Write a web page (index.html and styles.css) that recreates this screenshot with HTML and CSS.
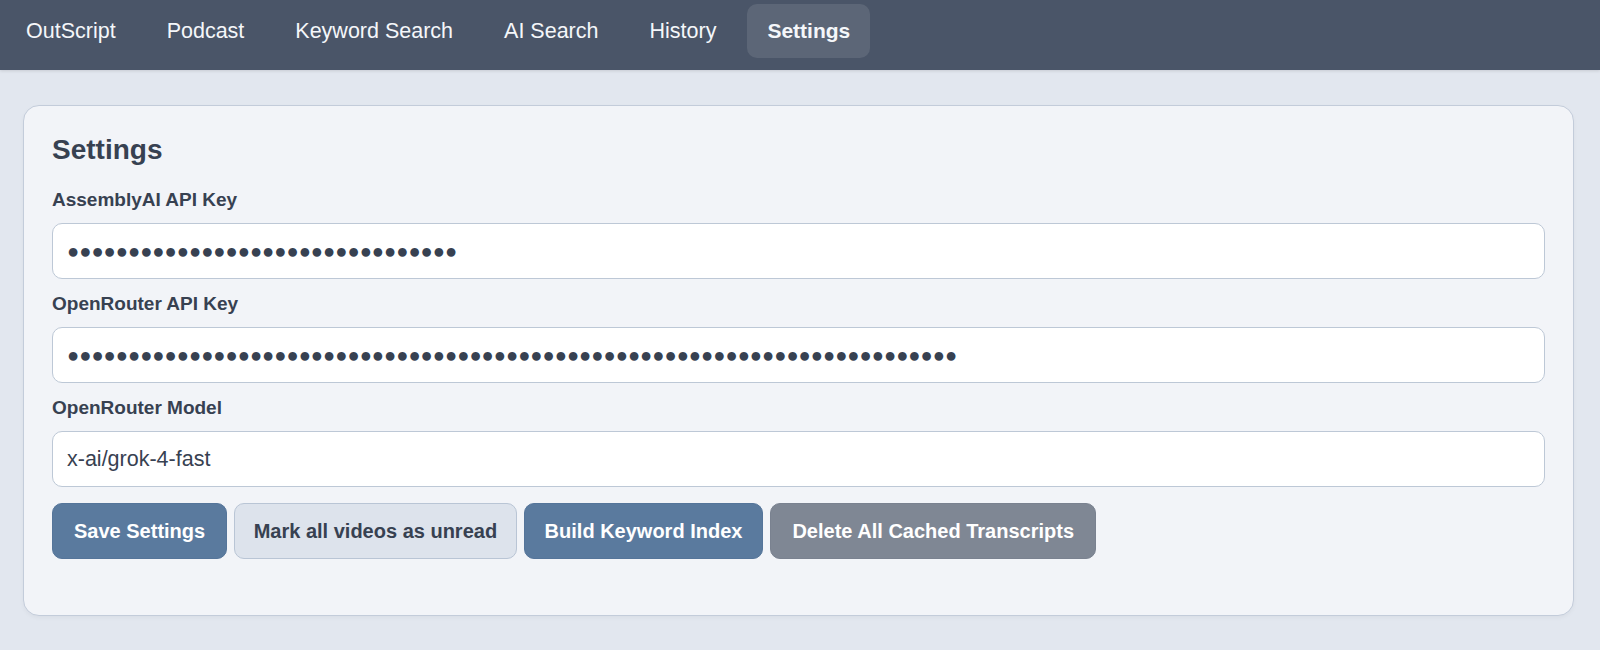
FILE: index.html
```html
<!DOCTYPE html>
<html lang="en">
<head>
  <meta charset="UTF-8" />
  <meta name="viewport" content="width=device-width, initial-scale=1.0" />
  <title>Settings | OutScript</title>
  <link rel="stylesheet" href="styles.css">
</head>
<body>

  <nav class="navbar">
    <a class="nav-link" href="#">OutScript</a>
    <a class="nav-link" href="#">Podcast</a>
    <a class="nav-link" href="#">Keyword Search</a>
    <a class="nav-link" href="#">AI Search</a>
    <a class="nav-link" href="#">History</a>
    <a class="nav-link active" href="#">Settings</a>
  </nav>

  <main class="page">
    <section class="card">
      <h2>Settings</h2>

      <label class="field-label" for="assemblyKey">AssemblyAI API Key</label>
      <input id="assemblyKey" class="field-input secret" type="text" value="●●●●●●●●●●●●●●●●●●●●●●●●●●●●●●●●" />

      <label class="field-label" for="openrouterKey">OpenRouter API Key</label>
      <input id="openrouterKey" class="field-input secret" type="text" value="●●●●●●●●●●●●●●●●●●●●●●●●●●●●●●●●●●●●●●●●●●●●●●●●●●●●●●●●●●●●●●●●●●●●●●●●●" />

      <label class="field-label" for="openrouterModel">OpenRouter Model</label>
      <input id="openrouterModel" class="field-input" type="text" value="x-ai/grok-4-fast" />

      <div class="actions">
        <button class="btn btn-primary">Save Settings</button>
        <button class="btn btn-light">Mark all videos as unread</button>
        <button class="btn btn-primary btn-index">Build Keyword Index</button>
        <button class="btn btn-muted">Delete All Cached Transcripts</button>
      </div>
    </section>
  </main>

</body>
</html>
```

FILE: styles.css
```css
/* General Body and Layout */
body {
  font-family: "Liberation Sans", Arial, sans-serif;
  margin: 0;
  padding: 0;
  background-color: #e2e7ef;
  color: #374151;
}

/* Top navigation */
.navbar {
  background-color: #4a5568;
  display: flex;
  align-items: center;
  gap: 11px;
  padding: 4px 6px 12px;
  box-shadow: 0 1px 3px rgba(0, 0, 0, 0.12);
}

.nav-link {
  display: block;
  height: 54px;
  line-height: 54px;
  padding: 0 20px;
  border-radius: 10px;
  font-size: 21.5px;
  color: #f5f7fa;
  text-decoration: none;
}

.nav-link.active {
  background-color: rgba(255, 255, 255, 0.1);
  font-weight: bold;
  font-size: 21px;
}

/* Settings card */
.page {
  padding: 35px 26px 30px 23px;
}

.card {
  background-color: #f2f4f8;
  border: 1px solid #c3ccda;
  border-radius: 16px;
  padding: 28px 28px 56px;
  box-shadow: 0 2px 4px rgba(0, 0, 0, 0.04);
}

.card h2 {
  font-size: 28px;
  margin: 0 0 23px;
  color: #374151;
}

.field-label {
  display: block;
  font-size: 19px;
  font-weight: bold;
  margin-bottom: 12px;
}

.field-input {
  display: block;
  box-sizing: border-box;
  width: 100%;
  height: 56px;
  padding: 0 14px;
  margin-bottom: 14px;
  border: 1px solid #bdc8d6;
  border-radius: 10px;
  background-color: #fff;
  font-family: inherit;
  font-size: 21.5px;
  color: #374151;
}

.field-input.secret {
  font-size: 20.2px;
}

/* Buttons */
.actions {
  display: flex;
  gap: 7px;
  margin-top: 16px;
}

.btn {
  height: 56px;
  padding: 0 21px;
  border: 1px solid transparent;
  border-radius: 10px;
  font-family: inherit;
  font-size: 20px;
  font-weight: bold;
  cursor: pointer;
}

.btn-primary {
  background-color: #5a7a9e;
  border-color: #55759a;
  color: #fff;
}

.btn-index {
  padding: 0 20px;
}

.btn-light {
  background-color: #dde3ec;
  border-color: #b9c5d5;
  color: #374151;
  padding: 0 18.5px;
}

.btn-muted {
  background-color: #7f8794;
  border-color: #7a8290;
  color: #fff;
}
```
